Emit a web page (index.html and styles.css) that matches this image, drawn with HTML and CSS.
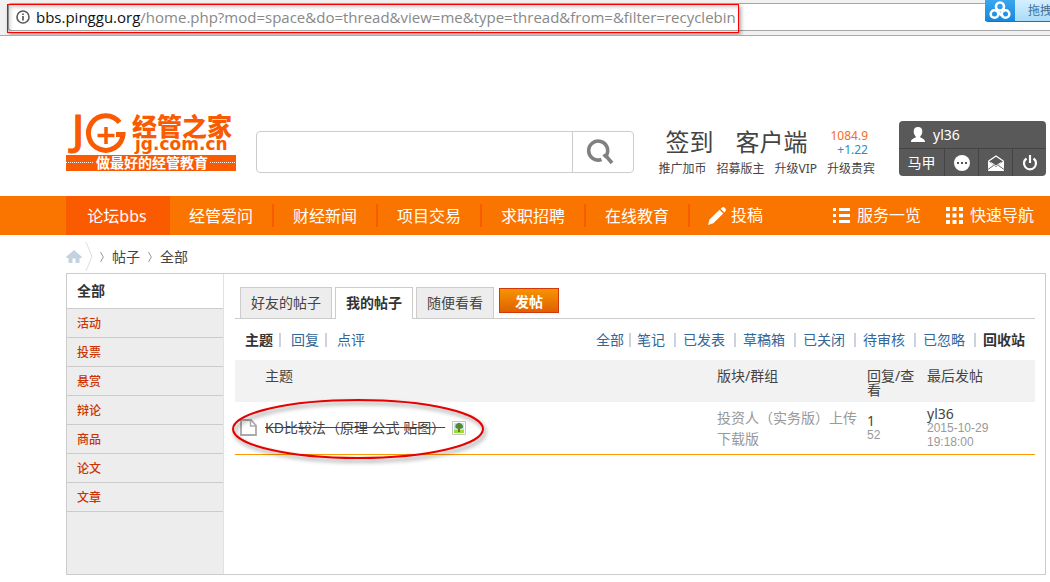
FILE: index.html
```html
<!DOCTYPE html>
<html lang="zh-CN">
<head>
<meta charset="utf-8">
<title>经管之家 - 帖子</title>
<link rel="stylesheet" href="styles.css">
</head>
<body>
<div class="browser-bar">
  <div class="address">
    <svg class="info-icon" viewBox="0 0 14 14" width="14" height="14" aria-hidden="true"><circle cx="7" cy="7" r="6" fill="none" stroke="#5a5a5a" stroke-width="1.6"/><path d="M7 6v4.5M7 3.4v1.6" stroke="#5a5a5a" stroke-width="1.7"/></svg>
    <span class="url"><span class="host">bbs.pinggu.org</span>/home.php?mod=space&amp;do=thread&amp;view=me&amp;type=thread&amp;from=&amp;filter=recyclebin</span>
  </div>
  <div class="url-frame"></div>
  <div class="cloud-badge">
    <span class="cloud-logo"><svg viewBox="0 0 22 19" width="22" height="19" aria-hidden="true"><g fill="none" stroke="#fff" stroke-width="2.6"><circle cx="11" cy="5.500" r="4"/><circle cx="5.500" cy="13" r="3.800"/><circle cx="16.500" cy="13" r="3.800"/><path d="M8.500 10.500 14 15.500"/></g></svg></span>
    <span class="cloud-text">拖拽</span>
  </div>
</div>

<header class="header wrap">
  <a class="logo" href="#" aria-label="经管之家">
    <svg viewBox="0 0 170 59" width="170" height="59">
      <text x="6" y="32" class="logo-j">J</text>
      <path d="M53.500 9.500A17.300 17.300 0 1 0 57 21.500H50" fill="none" stroke="#fa5a00" stroke-width="5"/>
      <path d="M40 14v17M31.500 22.500h17" stroke="#fa5a00" stroke-width="3.500"/>
      <text x="66" y="23" class="logo-name">经管之家</text>
      <text x="69" y="37" class="logo-domain">jg.com.cn</text>
      <rect x="0" y="42" width="170" height="16" fill="#fa5a00"/>
      <path d="M0 49.500h28M144 49.500h26" stroke="#fff" stroke-dasharray="1 1"/>
      <text x="86" y="55" class="logo-slogan">做最好的经管教育</text>
    </svg>
  </a>
  <form class="search">
    <input type="text" aria-label="搜索">
    <button type="button" aria-label="搜索"><svg viewBox="0 0 28 28" width="28" height="28"><path d="M15.500 21.500A9.500 9.500 0 1 1 20 18L26 25" fill="none" stroke="#808080" stroke-width="3.600"/><path d="M17.500 16.500 20.500 19.500" stroke="#808080" stroke-width="3"/></svg></button>
  </form>
  <div class="quick">
    <div class="quick-top">
      <a href="#">签到</a><a href="#">客户端</a>
      <span class="points"><span class="total">1084.9</span><span class="delta">+1.22</span></span>
    </div>
    <div class="quick-links"><a href="#">推广加币</a><a href="#">招募版主</a><a href="#">升级VIP</a><a href="#">升级贵宾</a></div>
  </div>
  <div class="account">
    <a class="user" href="#"><svg viewBox="0 0 14 16" width="14" height="16" aria-hidden="true"><path d="M7 0c3 0 4.500 2 4.300 4.800-.1 2-1 3.600-2 4.400v1.400c1.700.7 4.700 1.500 4.700 4.400H0c0-2.900 3-3.700 4.700-4.400V9.200c-1-.8-1.900-2.400-2-4.400C2.500 2 4 0 7 0z" fill="#fff"/></svg>yl36</a>
    <div class="account-tools">
      <a class="alt" href="#">马甲</a>
      <a href="#" aria-label="消息"><svg viewBox="0 0 16 16" width="16" height="16"><circle cx="8" cy="8" r="8" fill="#fff"/><g fill="#555"><rect x="3" y="7" width="2" height="2"/><rect x="7" y="7" width="2" height="2"/><rect x="11" y="7" width="2" height="2"/></g></svg></a>
      <a href="#" aria-label="邮件"><svg viewBox="0 0 16 16" width="16" height="16"><path d="M.7 6 8 1l7.300 5" fill="none" stroke="#fff" stroke-width="1.400"/><path d="M0 5.500 5.500 10 0 14zM16 5.500 10.500 10 16 14zM0 16v-1l6-4.500L8 12l2-1.500 6 4.500v1z" fill="#fff"/><path d="m0 15.500 7-4M16 15.500l-7-4M3 7.500l5 3.500 5-3.500" fill="none" stroke="#fff"/></svg></a>
      <a href="#" aria-label="退出"><svg viewBox="0 0 16 16" width="16" height="16"><path d="M4.500 3.500a6 6 0 1 0 7 0M8 0v8" fill="none" stroke="#fff" stroke-width="2.200"/></svg></a>
    </div>
  </div>
</header>

<nav class="nav">
  <div class="nav-inner wrap">
    <a class="active" href="#">论坛bbs</a><a href="#">经管爱问</a><a href="#">财经新闻</a><a href="#">项目交易</a><a href="#">求职招聘</a><a href="#">在线教育</a>
    <a class="nav-icon post" href="#"><svg viewBox="0 0 18 18" width="18" height="18" aria-hidden="true"><path d="M0 18 1.500 12.500 11.500 2.700 15.300 6.500 5.300 16.300zM12.500 1.700 14 .4q1.500-.8 3 .6t.6 3L16.300 5.500z" fill="#fff"/></svg>投稿</a>
    <a class="nav-icon services" href="#"><svg viewBox="0 0 17 15" width="17" height="15" aria-hidden="true"><path d="M0 0h3v3H0zM0 6h3v3H0zM0 12h3v3H0zM6 0h11v3H6zM6 6h11v3H6zM6 12h11v3H6z" fill="#fff"/></svg>服务一览</a>
    <a class="nav-icon guide" href="#"><svg viewBox="0 0 17 17" width="17" height="17" aria-hidden="true"><path d="M0 0h4v4H0zM6.500 0h4v4h-4zM13 0h4v4h-4zM0 6.500h4v4H0zM6.500 6.500h4v4h-4zM13 6.500h4v4h-4zM0 13h4v4H0zM6.500 13h4v4h-4zM13 13h4v4h-4z" fill="#fff"/></svg>快速导航</a>
  </div>
</nav>

<div class="crumbs wrap">
  <a href="#" aria-label="首页"><svg viewBox="0 0 16 13" width="16" height="13"><path d="M8 0 16 7l-1 1h-1.500v5H9.500V8.500h-3V13h-4V8H1L0 7z" fill="#c2d2e0"/></svg></a>
  <svg class="divider" viewBox="0 0 8 29" width="8" height="29" aria-hidden="true"><path d="M1 0 7 14.500 1 29" fill="none" stroke="#ddd"/></svg>
  <svg class="chevron" viewBox="0 0 4 10" width="4" height="10" aria-hidden="true"><path d="M.5 0 3.300 5 .5 10" fill="none" stroke="#999"/></svg>
  <a href="#">帖子</a>
  <svg class="chevron" viewBox="0 0 4 10" width="4" height="10" aria-hidden="true"><path d="M.5 0 3.300 5 .5 10" fill="none" stroke="#999"/></svg>
  <a href="#">全部</a>
</div>

<div class="panel wrap">
  <aside class="side">
    <a class="current" href="#">全部</a>
    <a href="#">活动</a><a href="#">投票</a><a href="#">悬赏</a><a href="#">辩论</a><a href="#">商品</a><a href="#">论文</a><a href="#">文章</a>
  </aside>
  <main class="main">
    <div class="tabs">
      <a href="#">好友的帖子</a><a class="selected" href="#">我的帖子</a><a href="#">随便看看</a>
      <button type="button">发帖</button>
    </div>
    <div class="filters">
      <div class="kinds"><a class="on" href="#">主题</a><a href="#">回复</a><a href="#">点评</a></div>
      <div class="states"><a href="#">全部</a><a class="near" href="#">笔记</a><a href="#">已发表</a><a href="#">草稿箱</a><a href="#">已关闭</a><a href="#">待审核</a><a href="#">已忽略</a><a class="on" href="#">回收站</a></div>
    </div>
    <div class="list">
      <table class="threads">
        <thead><tr><th class="c-icon"></th><th>主题</th><th class="c-forum">版块/群组</th><th class="c-num">回复/查看</th><th class="c-last">最后发帖</th></tr></thead>
        <tbody><tr>
          <td class="c-icon"><svg viewBox="0 0 18 18" width="18" height="18" aria-hidden="true"><path d="M1 1h10l5 5.500V16H1z" fill="#fff" stroke="#aaa" stroke-width="1.800"/><path d="M10.500 1v6H16" fill="none" stroke="#aaa" stroke-width="1.400"/></svg></td>
          <td><div class="subject"><a href="#">KD比较法（原理 公式 贴图）</a><svg viewBox="0 0 14 14" width="14" height="14" aria-hidden="true"><path d="M.5.5h13v13H.5z" fill="#fff" stroke="#c4c8b8"/><path d="M2 2h10v8H2z" fill="#bce6f6"/><path d="M2 9h10v3H2z" fill="#9d3"/><path d="M6 7h2v4H6z" fill="#a52"/><path d="M4 3.500Q7 0 10 3.500T8 8H6Q2 7 4 3.500z" fill="#583"/></svg></div></td>
          <td class="forum">投资人（实务版）上传下载版</td>
          <td><span class="main-line">1</span><span class="sub-line">52</span></td>
          <td><span class="main-line">yl36</span><span class="sub-line">2015-10-29 19:18:00</span></td>
        </tr></tbody>
      </table>
      <svg class="marker" viewBox="0 0 256 64" width="256" height="64" aria-hidden="true"><ellipse cx="128" cy="32" rx="125" ry="29" fill="none" stroke="#e60000" stroke-width="2"/></svg>
    </div>
  </main>
</div>
</body>
</html>
```
FILE: styles.css
```css
* { box-sizing: border-box; }
body {
  margin: 0;
  background: #fff;
  color: #444;
  font: 14px/20px "Noto Sans", "Noto Sans CJK SC", sans-serif;
}
a { color: inherit; text-decoration: none; }
svg { display: block; flex: none; }
.wrap { margin-left: 66px; margin-right: 4px; }

.browser-bar {
  position: relative;
  overflow: hidden;
  height: 36px;
  padding: 3px 0 0 8px;
  background: #f1f1f1;
  border-bottom: 1px solid #aaa;
}
.address {
  display: flex;
  align-items: center;
  gap: 6px;
  height: 28px;
  padding-left: 7px;
  background: #fff;
  border: 1px solid #a6a6a6;
  border-right: 0;
  border-radius: 3px 0 0 3px;
}
.url { font: 15px/20px "Open Sans", sans-serif; color: #888; white-space: nowrap; }
.host { color: #111; }
.url-frame {
  position: absolute;
  left: 7px;
  top: 4px;
  width: 732px;
  height: 29px;
  border: 1px solid #f00;
  box-shadow: 2px 2px 4px rgba(0, 0, 0, .35), inset 2px 2px 4px rgba(0, 0, 0, .2);
}
.cloud-badge {
  position: absolute;
  right: 0;
  top: 0;
  display: flex;
  width: 65px;
  height: 22px;
  border-bottom: 1px solid #1477b8;
  border-bottom-left-radius: 3px;
  background: linear-gradient(#d5efff, #a9dcf8);
  color: #3c6f94;
  font-size: 12px;
  line-height: 22px;
  white-space: nowrap;
}
.cloud-logo { flex: none; width: 30px; padding: 1px 4px; background: linear-gradient(#3aa6ee, #1688df); }
.cloud-text { padding-left: 13px; }

.header { display: flex; padding-top: 77px; height: 160px; }
.logo-j { font: 500 42px "Noto Sans", sans-serif; fill: #fa5a00; stroke: #fa5a00; }
.logo-name { font: 900 25px "Noto Sans CJK SC", sans-serif; fill: #fa5a00; }
.logo-domain { font: bold 17px "DejaVu Sans", sans-serif; fill: #fa5a00; }
.logo-slogan { font: bold 14px "Noto Sans CJK SC", sans-serif; fill: #fff; text-anchor: middle; }
.search {
  flex: 1;
  display: flex;
  height: 42px;
  margin: 18px 24px 0 20px;
  border: 1px solid #ccc;
  border-radius: 4px;
}
.search input { flex: 1; min-width: 0; padding: 0 10px; border: 0; background: none; font: inherit; }
.search button { width: 61px; padding: 0 13px; border: 0; border-left: 1px solid #ccc; background: none; }
.quick { margin-right: 24px; padding-top: 14px; white-space: nowrap; }
.quick-top { display: flex; gap: 22px; height: 33px; padding: 0 7px; font-size: 24px; line-height: 30px; }
.points { margin-left: auto; font-size: 12px; line-height: 14px; padding-top: 2px; text-align: right; }
.points span { display: block; }
.total { color: #f26c1f; }
.delta { color: #2a8fc0; }
.quick-links { display: flex; gap: 10px; font-size: 12px; line-height: 18px; }
.account { width: 147px; height: 55px; margin-top: 8px; border-radius: 4px; overflow: hidden; background: #595959; color: #fff; }
.user { display: flex; align-items: center; gap: 8px; height: 28px; padding-left: 12px; border-bottom: 1px solid #444; }
.account-tools { display: flex; height: 27px; }
.account-tools a { flex: 1; display: flex; align-items: center; justify-content: center; border-left: 1px solid #444; }
.account-tools .alt { flex: none; width: 45px; border-left: 0; }

.nav { background: #fa7500; color: #fff; font-size: 16px; line-height: 41px; }
.nav-inner { display: flex; height: 39px; white-space: nowrap; }
.nav-inner > a {
  width: 104px;
  padding-right: 2px;
  text-align: center;
  background: linear-gradient(#fa5a00, #fa5a00) right 8px / 2px 23px no-repeat;
}
.nav-inner > .active { background: #fa5a00; }
.nav-inner > .nav-icon { display: flex; align-items: center; gap: 7px; width: auto; padding-right: 0; background: none; }
.nav-inner > .post { gap: 5px; padding-left: 18px; }
.nav-inner > .services { margin-left: auto; }
.nav-inner > .guide { margin-left: 25px; padding-right: 12px; }

.crumbs { display: flex; align-items: center; height: 38px; padding-top: 5px; }
.divider { margin: 0 6px 0 3px; }
.chevron { margin: 0 8px 0 1px; }
.chevron ~ .chevron { margin: 0 8px; }

.panel { display: flex; min-height: 302px; border: 1px solid #ccc; margin-bottom: 7px; }
.side { width: 157px; background: #ededed; border-right: 1px solid #e2e2e2; }
.side a {
  display: block;
  height: 29px;
  padding-left: 10px;
  border-bottom: 1px solid #ccc;
  color: #c30;
  font-size: 12px;
  font-weight: 500;
  line-height: 30px;
}
.side .current { height: 35px; background: #fff; color: #333; font-size: 14px; font-weight: bold; line-height: 34px; }
.main { flex: 1; min-width: 0; padding: 13px 10px 0 11px; }
.tabs { display: flex; gap: 3px; height: 32px; padding-left: 5px; border-bottom: 1px solid #ccc; white-space: nowrap; }
.tabs a { height: 31px; padding: 0 10px; border: 1px solid #ccc; border-bottom: 0; background: #ededed; line-height: 30px; }
.tabs .selected { height: 32px; background: #fff; color: #333; font-weight: bold; }
.tabs button {
  width: 60px;
  height: 25px;
  margin: 1px 0 0 2px;
  padding: 0;
  border: 1px solid #d2380b;
  background: linear-gradient(#f79400, #e06000);
  color: #fff;
  font: bold 14px/20px "Noto Sans CJK SC", sans-serif;
}
.filters { display: flex; justify-content: space-between; height: 41px; padding: 11px 10px 0; color: #369; white-space: nowrap; }
.kinds, .states { display: flex; }
.filters a { height: 20px; }
.filters a + a {
  margin-left: 9px;
  padding-left: 9px;
  background: linear-gradient(#ccd3df, #ccd3df) left center / 2px 14px no-repeat;
}
.kinds a + a { margin-left: 6px; padding-left: 12px; }
.states a + .near { margin-left: 5px; padding-left: 8px; }
.filters .on { color: #333; font-weight: bold; }

.list { position: relative; }
.threads { width: 100%; table-layout: fixed; border-collapse: separate; border-spacing: 0; border-bottom: 1px solid #f90; }
.threads th { height: 42px; padding: 9px 0 0; background: #f2f2f2; font-weight: normal; line-height: 14px; text-align: left; vertical-align: top; }
.threads td { height: 52px; padding: 0; }
.threads .c-icon { width: 30px; padding-left: 5px; }
.threads .c-forum { width: 150px; }
.threads .c-num { width: 60px; padding-right: 10px; }
.threads .c-last { width: 108px; }
.subject { display: flex; align-items: center; gap: 7px; }
.subject a { text-decoration: line-through; }
.threads .forum { padding-right: 8px; color: #999; line-height: 21px; }
.main-line, .sub-line { display: block; width: 70px; line-height: 14px; }
.sub-line { color: #999; font: 12px/14px "Liberation Sans", sans-serif; }
.marker { position: absolute; left: -5px; top: 37px; filter: drop-shadow(2px 3px 2px rgba(0, 0, 0, .45)); }
```
